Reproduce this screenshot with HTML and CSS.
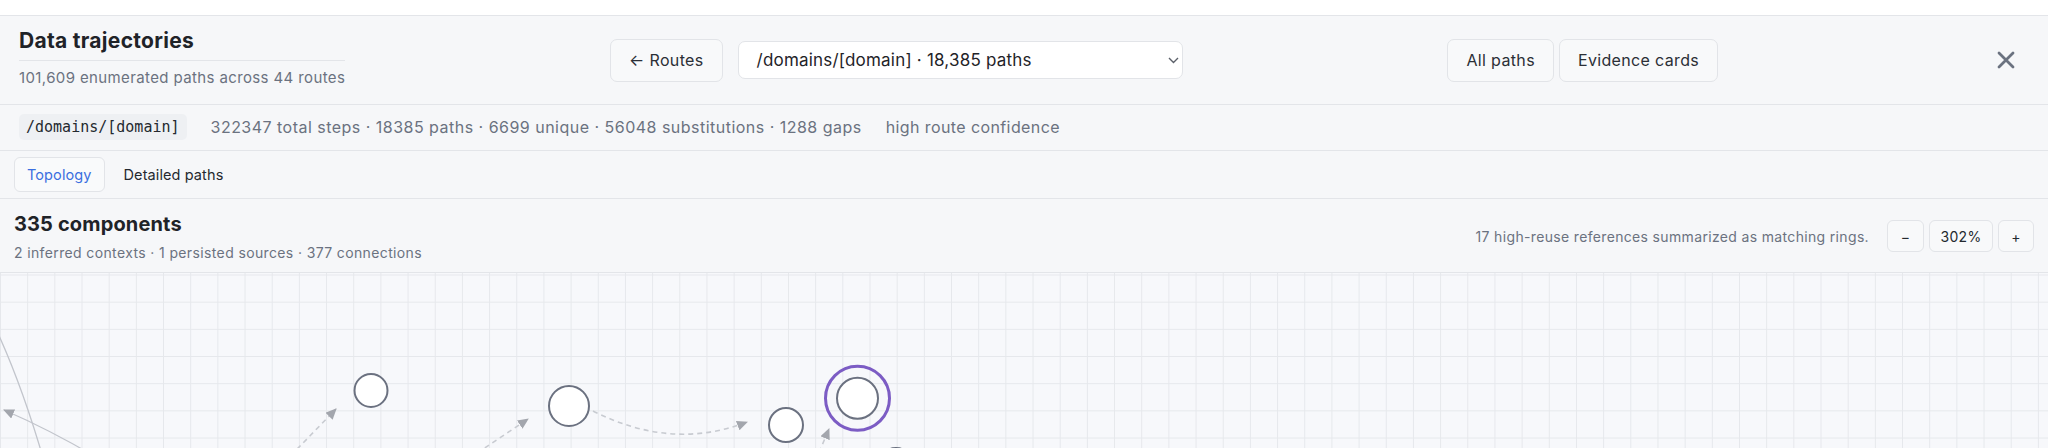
FILE: index.html
```html
<!DOCTYPE html>
<html lang="en">
<head>
  <meta charset="UTF-8" />
  <meta name="viewport" content="width=device-width, initial-scale=1.0" />
  <title>Data trajectories</title>
  <link rel="stylesheet" href="styles.css">
</head>
<body>

  <div class="panel">
    <header class="head">
      <div class="title-block">
        <h1>Data trajectories</h1>
        <p>101,609 enumerated paths across 44 routes</p>
      </div>

      <div class="nav">
        <button class="btn">&larr; Routes</button>
        <button class="picker">
          <span>/domains/[domain] · 18,385 paths</span>
          <svg width="11" height="7" viewBox="0 0 11 7"><polyline points="1,1 5.5,5.5 10,1" fill="none" stroke="#5b6069" stroke-width="1.4"/></svg>
        </button>
      </div>

      <div class="views">
        <button class="btn">All paths</button>
        <button class="btn">Evidence cards</button>
      </div>

      <button class="close" aria-label="Close">
        <svg width="18" height="18" viewBox="0 0 18 18"><path d="M2 2 L16 16 M16 2 L2 16" stroke="#6b7280" stroke-width="2.8" stroke-linecap="round"/></svg>
      </button>
    </header>

    <div class="meta">
      <code class="chip">/domains/[domain]</code>
      <span class="stats">322347 total steps · 18385 paths · 6699 unique · 56048 substitutions · 1288 gaps</span>
      <span>high route confidence</span>
    </div>

    <div class="tabs">
      <button class="tab active">Topology</button>
      <button class="tab">Detailed paths</button>
    </div>

    <div class="summary">
      <div class="summary-text">
        <h2>335 components</h2>
        <p>2 inferred contexts · 1 persisted sources · 377 connections</p>
      </div>
      <div class="summary-tools">
        <span class="note">17 high-reuse references summarized as matching rings.</span>
        <div class="zoom">
          <button class="zbtn minus">&minus;</button>
          <button class="zbtn pct">302%</button>
          <button class="zbtn">+</button>
        </div>
      </div>
    </div>

    <div class="canvas">
      <svg class="graph" width="2048" height="220" viewBox="0 0 2048 220">
        <defs>
          <marker id="tip" viewBox="0 0 11 10" refX="10" refY="5" markerWidth="11" markerHeight="10" markerUnits="userSpaceOnUse" orient="auto">
            <path d="M0 0 L11 5 L0 10 z" fill="#a3a6ad"/>
          </marker>
        </defs>

        <!-- edges -->
        <path class="edge-solid" d="M-4 56 Q22 112 44 188"/>
        <path class="edge-solid" d="M96 184 Q48 156 4 137" marker-end="url(#tip)"/>
        <path class="edge-dash" d="M272 202 L336 136" marker-end="url(#tip)"/>
        <path class="edge-dash" d="M440 205 L528 146" marker-end="url(#tip)"/>
        <path class="edge-dash" d="M593 138 Q672 178 747 149" marker-end="url(#tip)"/>
        <path class="edge-dash" d="M812 196 L829 156" marker-end="url(#tip)"/>

        <!-- nodes -->
        <circle class="node" cx="371" cy="117.5" r="16.5"/>
        <circle class="node" cx="569" cy="133" r="20"/>
        <circle class="node" cx="786" cy="152" r="17"/>
        <circle class="ring" cx="857.5" cy="125.3" r="32"/>
        <circle class="node" cx="857.5" cy="125.3" r="20.5"/>
        <circle class="node" cx="896" cy="193" r="18"/>
      </svg>
    </div>
  </div>

</body>
</html>
```

FILE: styles.css
```css
* {
  margin: 0;
  padding: 0;
  box-sizing: border-box;
}

body {
  background: #ffffff;
  font-family: Inter, "Noto Sans", sans-serif;
  color: #1f2328;
  padding-top: 15px;
  overflow: hidden;
}

button {
  font-family: inherit;
  cursor: pointer;
}

.panel {
  background: #f6f7f9;
  border-top: 1px solid #e3e5e9;
}

/* header row */
.head {
  display: flex;
  align-items: center;
  justify-content: space-between;
  padding: 16px 19px;
  border-bottom: 1px solid #e3e5e9;
}

.title-block {
  margin-top: -3px;
}

.title-block h1 {
  font-size: 21px;
  line-height: 24px;
  font-weight: 700;
  letter-spacing: 0.3px;
  padding-bottom: 7px;
  border-bottom: 1px solid #e3e5e9;
}

.title-block p {
  margin-top: 7px;
  font-size: 15px;
  line-height: 20px;
  letter-spacing: 0.38px;
  color: #6b7280;
}

.nav,
.views {
  display: flex;
  align-items: center;
}

.nav {
  gap: 15px;
}

.views {
  gap: 5px;
}

.btn {
  height: 43px;
  padding: 0 18px;
  font-size: 16px;
  letter-spacing: 0.35px;
  color: #2b2f36;
  background: #f8f9fa;
  border: 1px solid #e2e4e8;
  border-radius: 7px;
}

.picker {
  display: flex;
  align-items: center;
  justify-content: space-between;
  width: 445px;
  height: 38px;
  padding: 0 3px 0 18px;
  font-size: 17px;
  letter-spacing: 0.2px;
  color: #1f2328;
  background: #ffffff;
  border: 1px solid #e2e4e8;
  border-radius: 7px;
}

.close {
  width: 46px;
  height: 40px;
  display: flex;
  align-items: center;
  justify-content: center;
  background: none;
  border: none;
}

/* route meta row */
.meta {
  display: flex;
  align-items: center;
  gap: 24px;
  padding: 9px 19px 10px;
  font-size: 16px;
  line-height: 26px;
  letter-spacing: 0.4px;
  color: #6b7280;
  border-bottom: 1px solid #e3e5e9;
}

.meta .stats {
  letter-spacing: 0.48px;
}

.chip {
  font-family: "DejaVu Sans Mono", "Liberation Mono", monospace;
  font-size: 15px;
  line-height: 18px;
  letter-spacing: 0;
  padding: 4px 7px;
  color: #24292f;
  background: #eef0f3;
  border-radius: 5px;
}

/* tabs */
.tabs {
  display: flex;
  gap: 6px;
  padding: 6px 14px;
  border-bottom: 1px solid #e3e5e9;
}

.tab {
  height: 35px;
  padding: 0 12px;
  font-size: 14.5px;
  letter-spacing: 0.1px;
  color: #24292f;
  background: none;
  border: 1px solid transparent;
  border-radius: 6px;
}

.tab.active {
  color: #3b6fe0;
  background: #f9fafb;
  border-color: #e2e4e8;
}

/* summary row */
.summary {
  display: flex;
  align-items: center;
  justify-content: space-between;
  padding: 13px 14px 9px;
  border-bottom: 1px solid #e3e5e9;
}

.summary-text h2 {
  font-size: 20px;
  line-height: 24px;
  font-weight: 700;
  letter-spacing: 0.15px;
}

.summary-text p {
  margin-top: 7px;
  font-size: 14px;
  line-height: 20px;
  letter-spacing: 0.37px;
  color: #6b7280;
}

.summary-tools {
  display: flex;
  align-items: center;
  gap: 18px;
  margin-top: -3px;
}

.note {
  font-size: 14px;
  letter-spacing: 0.34px;
  color: #6b7280;
}

.zoom {
  display: flex;
  gap: 5px;
}

.zbtn {
  min-width: 36px;
  height: 32px;
  padding: 0 10px;
  font-size: 14px;
  letter-spacing: 0.3px;
  color: #24292f;
  background: #f8f9fa;
  border: 1px solid #e2e4e8;
  border-radius: 6px;
}

.zbtn.minus {
  min-width: 37px;
}

.zbtn.pct {
  min-width: 64px;
}

/* topology canvas */
.canvas {
  height: 400px;
  overflow: hidden;
  background-color: #f7f8fb;
  background-image:
    linear-gradient(to right, #e6e8ec 1px, transparent 1px),
    linear-gradient(to bottom, #e6e8ec 1px, transparent 1px);
  background-size: 27.18px 27.18px;
  background-position: 0 1.5px;
}

.graph {
  display: block;
}

.node {
  fill: #ffffff;
  stroke: #6b7180;
  stroke-width: 2;
}

.ring {
  fill: none;
  stroke: #7c5cc4;
  stroke-width: 3;
}

.edge-solid {
  fill: none;
  stroke: #c2c5cc;
  stroke-width: 1.3;
}

.edge-dash {
  fill: none;
  stroke: #c8cbd1;
  stroke-width: 1.6;
  stroke-dasharray: 5 4;
}
```
